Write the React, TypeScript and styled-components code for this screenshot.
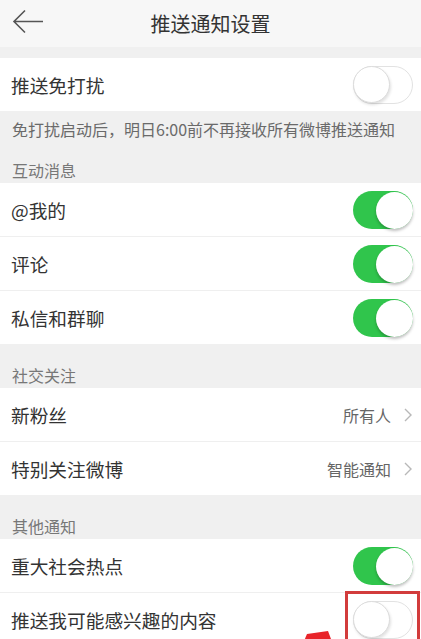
import React from 'react'
import styled, { createGlobalStyle } from 'styled-components'

const GlobalStyle = createGlobalStyle`
  html, body {
    margin: 0;
    padding: 0;
    background: #f0f0f0;
  }
  body {
    font-family: 'Noto Sans CJK SC', 'Noto Sans', sans-serif;
    color: #333;
  }
`

const Page = styled.div`
  width: 421px;
  min-height: 639px;
  background: #f0f0f0;
  overflow: hidden;
`

const Header = styled.div`
  height: 47px;
  background: #f7f7f7;
  display: flex;
  align-items: center;
  justify-content: center;
  position: relative;
`

const Title = styled.div`
  font-size: 20px;
  color: #333;
  line-height: 47px;
`

const BackButton = styled.div`
  position: absolute;
  left: 12px;
  top: 9px;
  width: 32px;
  height: 26px;
  display: flex;
`

const Group = styled.div`
  background: #fff;
  margin-top: ${p => (p.$gap ? '11px' : '0')};
`

const Row = styled.div`
  height: 53px;
  display: flex;
  align-items: center;
  justify-content: space-between;
  padding: 0 8px 0 11px;
  position: relative;
  & + & {
    border-top: 1px solid #efefef;
  }
`

const Label = styled.span`
  font-size: 18.7px;
  color: #333;
`

const Value = styled.span`
  display: flex;
  align-items: center;
  gap: 13px;
  padding-right: 1px;
  font-size: 16px;
  color: #666;
`

const Note = styled.div`
  height: 37px;
  line-height: 37px;
  padding: 0 12px;
  font-size: 16px;
  color: #6a6a6a;
  white-space: nowrap;
`

const SectionTitle = styled.div`
  padding: ${p => (p.$tight ? '11px' : '20px')} 12px 2px;
  line-height: 22px;
  font-size: 16px;
  color: #777;
`

const Track = styled.div`
  width: 60px;
  height: 38px;
  box-sizing: border-box;
  border-radius: 19px;
  position: relative;
  background: ${p => (p.$on ? '#30c54c' : '#fff')};
  border: ${p => (p.$on ? 'none' : '1.5px solid #e2e2e2')};
`

const Knob = styled.div`
  position: absolute;
  top: ${p => (p.$on ? '1px' : '-1px')};
  ${p => (p.$on ? 'right: 0;' : 'left: -1px;')}
  width: 37px;
  height: 37px;
  box-sizing: border-box;
  border-radius: 50%;
  background: #fff;
  border: ${p => (p.$on ? 'none' : '1.5px solid #dcdcdc')};
  box-shadow: ${p => (p.$on ? '0 2px 3px rgba(0,0,0,0.25)' : '1px 2px 3px rgba(0,0,0,0.12)')};
`

const Highlight = styled.div`
  position: absolute;
  right: 1px;
  top: -2px;
  width: 75px;
  height: 60px;
  box-sizing: border-box;
  border: 3px solid #d23c3c;
  pointer-events: none;
`

const Pointer = styled.svg`
  position: absolute;
  left: 304px;
  top: 38px;
`

const Toggle = ({ on }: { on?: boolean }) => (
  <Track $on={on}>
    <Knob $on={on} />
  </Track>
)

const Chevron = () => (
  <svg width="8" height="14" viewBox="0 0 8 14">
    <path d="M1 1 L7 7 L1 13" fill="none" stroke="#b8b8b8" strokeWidth="1.4" />
  </svg>
)

export default function App() {
  return (
    <Page>
      <GlobalStyle />
      <Header>
        <BackButton>
          <svg width="32" height="26" viewBox="0 0 32 26">
            <path d="M2 12.5 H31 M13 1.5 L2 12.5 L13 23.5" fill="none" stroke="#555" strokeWidth="1.6" />
          </svg>
        </BackButton>
        <Title>推送通知设置</Title>
      </Header>

      <Group $gap>
        <Row>
          <Label>推送免打扰</Label>
          <Toggle />
        </Row>
      </Group>
      <Note>免打扰启动后，明日6:00前不再接收所有微博推送通知</Note>

      <SectionTitle $tight>互动消息</SectionTitle>
      <Group>
        <Row>
          <Label>@我的</Label>
          <Toggle on />
        </Row>
        <Row>
          <Label>评论</Label>
          <Toggle on />
        </Row>
        <Row>
          <Label>私信和群聊</Label>
          <Toggle on />
        </Row>
      </Group>

      <SectionTitle>社交关注</SectionTitle>
      <Group>
        <Row>
          <Label>新粉丝</Label>
          <Value>
            所有人
            <Chevron />
          </Value>
        </Row>
        <Row>
          <Label>特别关注微博</Label>
          <Value>
            智能通知
            <Chevron />
          </Value>
        </Row>
      </Group>

      <SectionTitle>其他通知</SectionTitle>
      <Group>
        <Row>
          <Label>重大社会热点</Label>
          <Toggle on />
        </Row>
        <Row>
          <Label>推送我可能感兴趣的内容</Label>
          <Toggle />
          <Highlight />
          <Pointer width="28" height="12" viewBox="0 0 28 12">
            <polygon points="3,3 24,0 27,8 0,10" fill="#e8242a" />
          </Pointer>
        </Row>
      </Group>
    </Page>
  )
}
